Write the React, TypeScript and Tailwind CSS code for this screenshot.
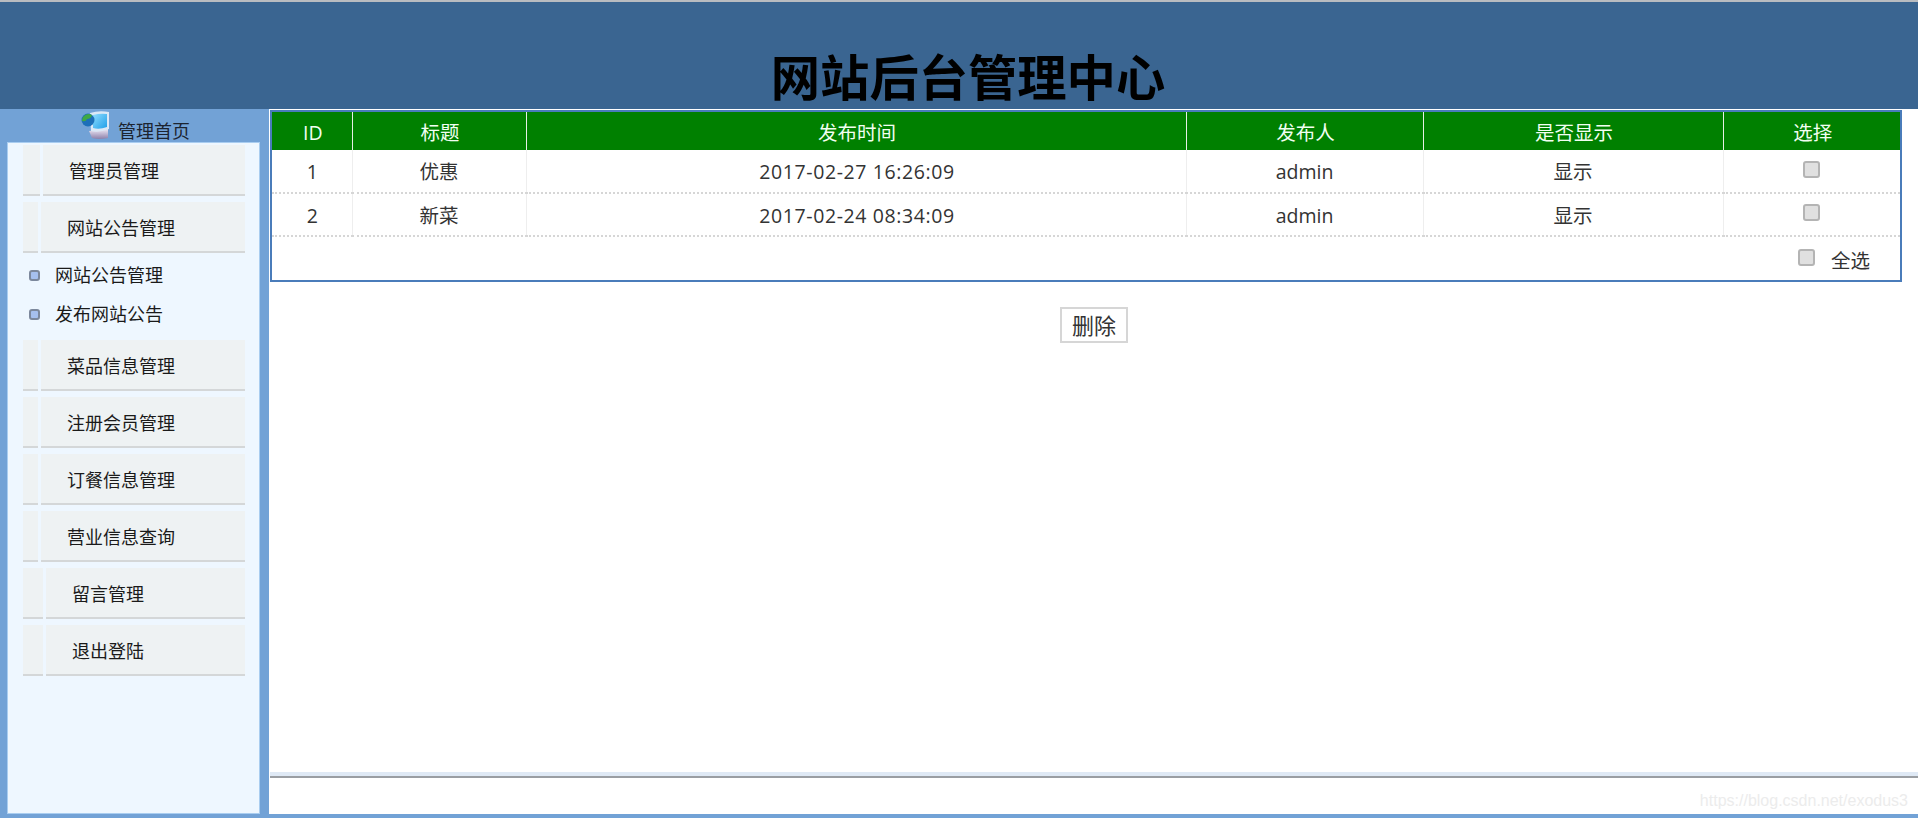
const bodyFont = "font-['Open_Sans','Noto_Sans_CJK_SC',sans-serif]";

const menuTop = [
  { label: '管理员管理', left: 'w-[17px]', pad: 'pl-[26px]' },
  { label: '网站公告管理', left: 'w-[15px]', pad: 'pl-[26px]' },
];

const menuBottom = [
  { label: '菜品信息管理', left: 'w-[15px]', pad: 'pl-[26px]' },
  { label: '注册会员管理', left: 'w-[15px]', pad: 'pl-[26px]' },
  { label: '订餐信息管理', left: 'w-[15px]', pad: 'pl-[26px]' },
  { label: '营业信息查询', left: 'w-[15px]', pad: 'pl-[26px]' },
  { label: '留言管理', left: 'w-[20px]', pad: 'pl-[26px]' },
  { label: '退出登陆', left: 'w-[20px]', pad: 'pl-[26px]' },
];

const rows = [
  { id: 1, title: '优惠', time: '2017-02-27 16:26:09', author: 'admin', show: '显示' },
  { id: 2, title: '新菜', time: '2017-02-24 08:34:09', author: 'admin', show: '显示' },
];

function MenuItem({ label, left, pad }: { label: string; left: string; pad: string }) {
  return (
    <div className="flex h-[51px] gap-[3px]">
      <div className={`${left} shrink-0 border-b-2 border-[#d4d7d8] bg-[#eef2f3]`} />
      <div className={`flex flex-1 items-center ${pad} border-b-2 border-[#d4d7d8] bg-[#eef2f3] pt-[4px] text-[18px] text-[#1a1a1a]`}>
        {label}
      </div>
    </div>
  );
}

function ComputerIcon() {
  return (
    <svg width="29" height="30" viewBox="0 0 29 30">
      <defs>
        <linearGradient id="screen" x1="0" y1="0" x2="1" y2="1">
          <stop offset="0" stopColor="#8fdcff" />
          <stop offset="1" stopColor="#1f9fe8" />
        </linearGradient>
        <linearGradient id="base" x1="0" y1="0" x2="0" y2="1">
          <stop offset="0" stopColor="#efeaf6" />
          <stop offset="1" stopColor="#8d80aa" />
        </linearGradient>
      </defs>
      <path d="M8 21 L27 19 L27 28 Q18 30 11 28 Z" fill="url(#base)" />
      <path d="M9 3 Q18 0 28 2 L28 19 Q18 23 10 21 Z" fill="#dbe8f6" />
      <path d="M12 5 Q19 3 26 4 L26 17 Q18 20 12 18 Z" fill="url(#screen)" />
      <circle cx="7" cy="10" r="6.500" fill="#1d6fb8" />
      <path d="M2 7 Q6 2 11 5 Q10 9 6 9 Q5 12 1 11 Q1 9 2 7 Z" fill="#3fa844" />
    </svg>
  );
}

function Check() {
  return (
    <input
      type="checkbox"
      readOnly
      className="h-[17px] w-[17px] appearance-none rounded-[3px] border-2 border-[#b4b4b4] bg-[#e0e0e0]"
    />
  );
}

export default function App() {
  return (
    <div className={`flex h-[818px] w-[1918px] flex-col overflow-hidden bg-[#72a2d6] ${bodyFont}`}>
      {/* Header */}
      <div className="flex h-[109px] shrink-0 items-end justify-center border-t-2 border-[#b9bcc0] bg-[#3a6591]">
        <h1 className="mb-[-1px] pl-[18px] text-[49.300px] leading-[66px] font-bold text-black">网站后台管理中心</h1>
      </div>

      <div className="flex min-h-0 flex-1">
        {/* Sidebar */}
        <div className="flex w-[269px] shrink-0 flex-col">
          <div className="flex h-[33px] items-start pt-[1px] pl-[81px]">
            <ComputerIcon />
            <span className="mt-[9px] ml-[8px] text-[18px] leading-[24px] text-[#1c2430]">管理首页</span>
          </div>
          <div className="ml-[7px] flex w-[253px] flex-1 flex-col border border-[#a9cdf0] bg-[#eef7ff] pt-[2px] pr-[14px] pl-[15px]">
            <div className="flex flex-col gap-[6px]">
              {menuTop.map((m) => (
                <MenuItem key={m.label} {...m} />
              ))}
            </div>
            <div className="flex h-[87px] flex-col pt-[3px] text-[18px] text-[#1a1a1a]">
              {['网站公告管理', '发布网站公告'].map((s) => (
                <div key={s} className="flex h-[39px] items-center pl-[6px]">
                  <span className="h-[11px] w-[11px] rounded-[3px] border-2 border-[#7c889c] bg-[#a6c0ee]" />
                  <span className="ml-[15px]">{s}</span>
                </div>
              ))}
            </div>
            <div className="flex flex-col gap-[6px]">
              {menuBottom.map((m) => (
                <MenuItem key={m.label} {...m} />
              ))}
            </div>
          </div>
        </div>

        {/* Content */}
        <div className="flex min-w-0 flex-1 flex-col bg-white pt-[1px]">
          <div className="flex-1">
            <div className="ml-[1px] h-[172px] w-[1632px] border-2 border-[#4a7cba] bg-white">
              <table className="w-full table-fixed border-collapse text-center text-[19.500px] text-[#333]">
                <colgroup>
                  <col className="w-[80px]" />
                  <col className="w-[174px]" />
                  <col className="w-[660px]" />
                  <col className="w-[237px]" />
                  <col className="w-[300px]" />
                  <col />
                </colgroup>
                <thead>
                  <tr className="h-[38px] bg-[#008000] text-[#f2fff2]">
                    {['ID', '标题', '发布时间', '发布人', '是否显示', '选择'].map((h, i) => (
                      <th
                        key={h}
                        className={`p-0 pt-[4px] pl-[2px] font-normal ${i < 5 ? 'border-r border-[#e6efe6]' : ''}`}
                      >
                        {h}
                      </th>
                    ))}
                  </tr>
                </thead>
                <tbody>
                  {rows.map((r) => (
                    <tr key={r.id} className="h-[43px] border-b-2 border-dotted border-[#d6d6d6]">
                      <td className="border-r border-[#eeeeee] p-0 pt-[2px] pl-[1px]">{r.id}</td>
                      <td className="border-r border-[#eeeeee] p-0 pt-[2px]">{r.title}</td>
                      <td className="border-r border-[#eeeeee] p-0 pt-[2px] pl-[2px] tracking-[0.6px]">{r.time}</td>
                      <td className="border-r border-[#eeeeee] p-0 pt-[2px]">{r.author}</td>
                      <td className="border-r border-[#eeeeee] p-0 pt-[2px]">{r.show}</td>
                      <td className="p-0">
                        <div className="flex justify-center pb-[4px]">
                          <Check />
                        </div>
                      </td>
                    </tr>
                  ))}
                </tbody>
              </table>
              <div className="flex h-[44px] items-center justify-end pr-[30px] text-[19.500px] text-[#333]">
                <div className="mb-[4px] flex">
                  <Check />
                </div>
                <span className="mt-[4px] ml-[16px]">全选</span>
              </div>
            </div>
            <div className="mt-[25px] flex pl-[791px]">
              <button className="flex h-[36px] w-[68px] items-center justify-center border-2 border-[#d6d6d6] bg-white text-[22px] text-[#333]">
                删除
              </button>
            </div>
          </div>

          <div className="ml-[1px] h-[6px] shrink-0 border-b-2 border-[#9a9ea3] bg-[#dfe9f5]" />
          <div className="flex h-[36px] shrink-0 items-center justify-end pt-[9px] pr-[10px] font-['Liberation_Sans',sans-serif] text-[16px] text-[#ececec]">
            https://blog.csdn.net/exodus3
          </div>
        </div>
      </div>
      <div className="h-[4px] shrink-0" />
    </div>
  );
}
